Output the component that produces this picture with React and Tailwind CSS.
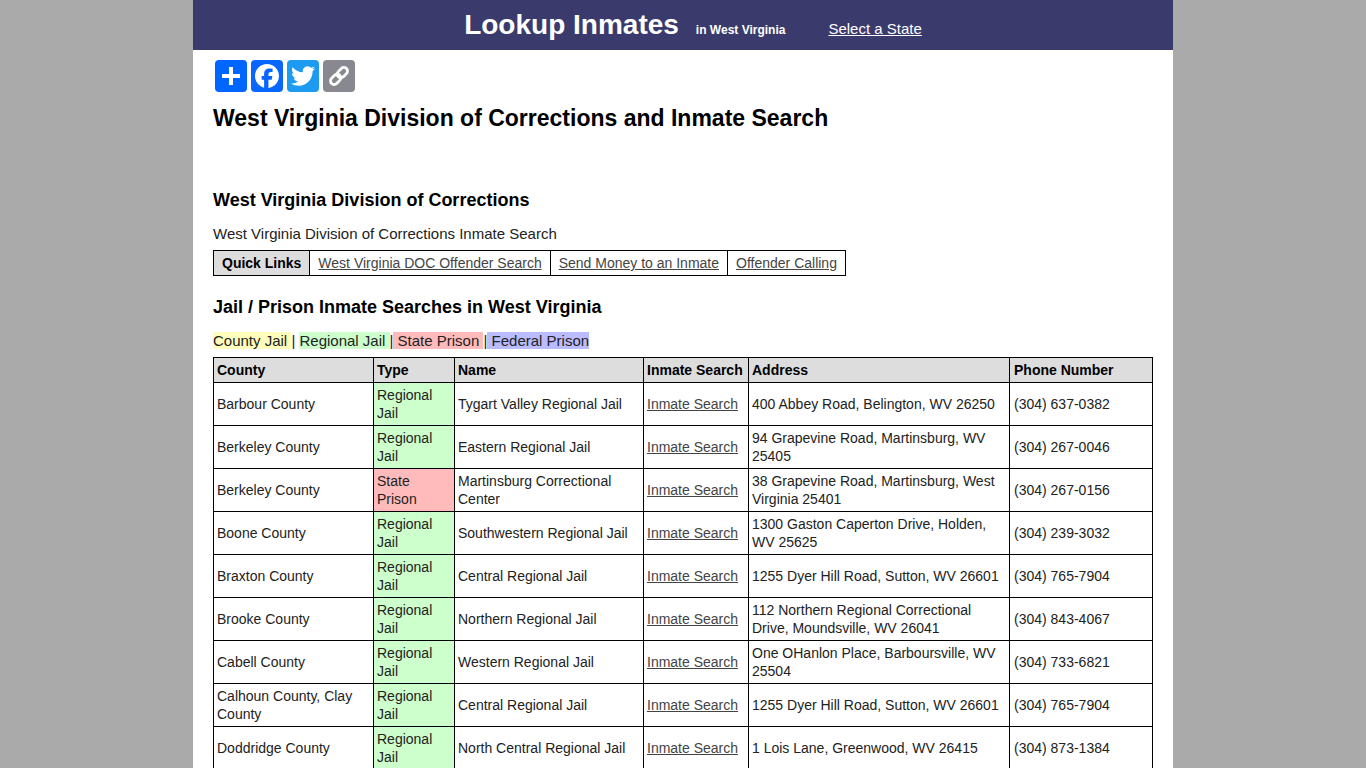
const rows = [
  ['Barbour County', 'Regional Jail', 'Tygart Valley Regional Jail', '400 Abbey Road, Belington, WV 26250', '(304) 637-0382'],
  ['Berkeley County', 'Regional Jail', 'Eastern Regional Jail', '94 Grapevine Road, Martinsburg, WV 25405', '(304) 267-0046'],
  ['Berkeley County', 'State Prison', 'Martinsburg Correctional Center', '38 Grapevine Road, Martinsburg, West Virginia 25401', '(304) 267-0156'],
  ['Boone County', 'Regional Jail', 'Southwestern Regional Jail', '1300 Gaston Caperton Drive, Holden, WV 25625', '(304) 239-3032'],
  ['Braxton County', 'Regional Jail', 'Central Regional Jail', '1255 Dyer Hill Road, Sutton, WV 26601', '(304) 765-7904'],
  ['Brooke County', 'Regional Jail', 'Northern Regional Jail', '112 Northern Regional Correctional Drive, Moundsville, WV 26041', '(304) 843-4067'],
  ['Cabell County', 'Regional Jail', 'Western Regional Jail', 'One OHanlon Place, Barboursville, WV 25504', '(304) 733-6821'],
  ['Calhoun County, Clay County', 'Regional Jail', 'Central Regional Jail', '1255 Dyer Hill Road, Sutton, WV 26601', '(304) 765-7904'],
  ['Doddridge County', 'Regional Jail', 'North Central Regional Jail', '1 Lois Lane, Greenwood, WV 26415', '(304) 873-1384'],
]

function ShareIcons() {
  return (
    <div className="flex gap-1 pl-[2px]">
      <svg width="32" height="32" viewBox="0 0 32 32" className="rounded bg-[#0166ff]">
        <path fill="#fff" d="M14 7h4v18h-4z" />
        <path fill="#fff" d="M7 14h18v4H7z" />
      </svg>
      <svg width="32" height="32" viewBox="0 0 32 32" className="rounded bg-[#0866ff]">
        <path fill="#fff" d="M28 16c0-6.627-5.373-12-12-12S4 9.373 4 16c0 5.628 3.875 10.35 9.101 11.647v-7.98h-2.474V16H13.1v-1.58c0-4.085 1.849-5.978 5.859-5.978.76 0 2.072.15 2.608.298v3.325c-.283-.03-.775-.045-1.386-.045-1.967 0-2.728.745-2.728 2.683V16h3.92l-.673 3.667h-3.247v8.245C23.395 27.195 28 22.135 28 16" />
      </svg>
      <svg width="32" height="32" viewBox="0 0 32 32" className="rounded bg-[#1d9bf0]">
        <path fill="#fff" d="M28 8.557a10 10 0 0 1-2.828.775 4.93 4.93 0 0 0 2.166-2.725 9.7 9.7 0 0 1-3.13 1.194 4.92 4.92 0 0 0-3.593-1.55 4.924 4.924 0 0 0-4.794 6.049c-4.09-.21-7.72-2.17-10.15-5.15a4.94 4.94 0 0 0-.665 2.477c0 1.71.87 3.214 2.19 4.1a5 5 0 0 1-2.23-.616v.06c0 2.39 1.7 4.38 3.952 4.83-.414.115-.85.174-1.297.174q-.476-.001-.928-.086a4.935 4.935 0 0 0 4.6 3.42 9.9 9.9 0 0 1-6.114 2.107q-.597 0-1.175-.068a13.95 13.95 0 0 0 7.55 2.213c9.056 0 14.01-7.507 14.01-14.013q0-.32-.015-.637c.96-.695 1.795-1.56 2.455-2.55z" />
      </svg>
      <svg width="32" height="32" viewBox="0 0 32 32" className="rounded bg-[#888990]">
        <g fill="none" stroke="#fff" strokeWidth="2.8" transform="rotate(-45 16 16)">
          <rect x="5.5" y="12.4" width="11.5" height="7.2" rx="3.6" />
          <rect x="15" y="12.4" width="11.5" height="7.2" rx="3.6" />
        </g>
      </svg>
    </div>
  )
}

function TypeCell({ type }) {
  const bg = type === 'State Prison' ? 'bg-[#ffbbbb]' : 'bg-[#ccffcc]'
  return <td className={`border border-black px-[3px] py-[3px] ${bg}`}>{type}</td>
}

export default function App() {
  return (
    <div className="min-h-screen bg-[#aaaaaa] font-['Liberation_Sans',Arial,sans-serif] text-black">
      <div className="mx-auto w-[980px] bg-white">
        <div className="flex h-[50px] items-center justify-center bg-[#3b3a6d] pl-5 text-white">
          <span className="text-[28px] font-bold leading-none">Lookup Inmates</span>
          <span className="ml-[17px] mt-[9px] text-xs font-bold">in West Virginia</span>
          <a href="#" className="ml-[43px] mt-[8px] text-[15px] underline">Select a State</a>
        </div>

        <div className="px-5 pt-[10px]">
          <ShareIcons />
          <h1 className="mt-[11px] text-[23px] font-bold leading-[30px]">West Virginia Division of Corrections and Inmate Search</h1>

          <h2 className="mt-[56px] text-lg font-bold leading-[22px]">West Virginia Division of Corrections</h2>
          <p className="mt-[14px] text-[15px] leading-[18px] text-[#222222]">West Virginia Division of Corrections Inmate Search</p>

          <table className="mt-[7px] border-collapse text-sm leading-[18px]">
            <tbody>
              <tr>
                <td className="border border-black bg-[#dddddd] px-2 py-[3px] font-bold">Quick Links</td>
                <td className="border border-black px-2 py-[3px]"><a href="#" className="text-[#444444] underline">West Virginia DOC Offender Search</a></td>
                <td className="border border-black px-2 py-[3px]"><a href="#" className="text-[#444444] underline">Send Money to an Inmate</a></td>
                <td className="border border-black px-2 py-[3px]"><a href="#" className="text-[#444444] underline">Offender Calling</a></td>
              </tr>
            </tbody>
          </table>

          <h2 className="mt-[20px] text-lg font-bold leading-[22px]">Jail / Prison Inmate Searches in West Virginia</h2>
          <p className="mt-[14px] whitespace-pre-wrap text-[15px] leading-[17px] text-[#222222]">
            <span className="bg-[#ffffbb]">County Jail </span>| <span className="bg-[#ccffcc]">Regional Jail </span>|<span className="bg-[#ffbbbb]"> State Prison </span>|<span className="bg-[#bbbbff]"> Federal Prison</span>
          </p>

          <table className="mt-[8px] w-[939px] table-fixed border-collapse text-sm leading-[18px] text-[#222222]">
            <colgroup>
              <col className="w-[160px]" />
              <col className="w-[81px]" />
              <col className="w-[189px]" />
              <col className="w-[105px]" />
              <col className="w-[261px]" />
              <col className="w-[143px]" />
            </colgroup>
            <thead>
              <tr className="bg-[#dddddd] text-left font-bold text-black">
                <th className="border border-black px-[3px] py-[3px]">County</th>
                <th className="border border-black px-[3px] py-[3px]">Type</th>
                <th className="border border-black px-[3px] py-[3px]">Name</th>
                <th className="border border-black px-[3px] py-[3px]">Inmate Search</th>
                <th className="border border-black px-[3px] py-[3px]">Address</th>
                <th className="border border-black px-[4px] py-[3px]">Phone Number</th>
              </tr>
            </thead>
            <tbody>
              {rows.map((r, i) => (
                <tr key={i} className="h-[43px]">
                  <td className="border border-black px-[3px] py-[3px]">{r[0]}</td>
                  <TypeCell type={r[1]} />
                  <td className="border border-black px-[3px] py-[3px]">{r[2]}</td>
                  <td className="border border-black px-[3px] py-[3px]"><a href="#" className="text-[#444444] underline">Inmate Search</a></td>
                  <td className="border border-black px-[3px] py-[3px]">{r[3]}</td>
                  <td className="border border-black px-[4px] py-[3px]">{r[4]}</td>
                </tr>
              ))}
            </tbody>
          </table>
        </div>
      </div>
    </div>
  )
}
